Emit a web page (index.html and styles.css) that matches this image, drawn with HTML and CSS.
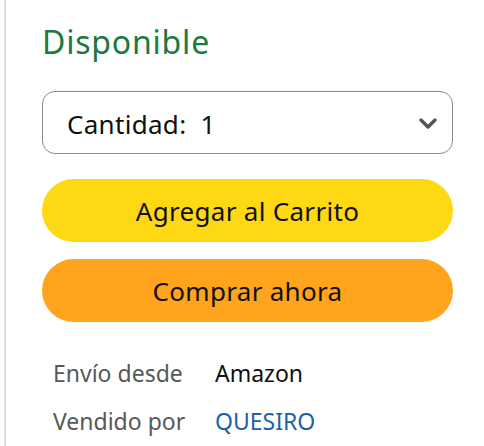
FILE: index.html
```html
<!DOCTYPE html>
<html lang="es">
<head>
  <meta charset="UTF-8">
  <meta name="viewport" content="width=device-width, initial-scale=1">
  <title>Comprar</title>
  <link rel="stylesheet" href="styles.css">
</head>
<body>
  <div class="caja">
    <div class="disponible">Disponible</div>

    <div class="cantidad">
      <span>Cantidad:&nbsp; 1</span>
      <svg class="flecha" width="20" height="14" viewBox="0 0 20 14">
        <path d="M3 3 L10 10 L17 3" fill="none" stroke="#555" stroke-width="3.4" stroke-linecap="round" stroke-linejoin="round"/>
      </svg>
    </div>

    <button class="boton carrito">Agregar al Carrito</button>
    <button class="boton comprar">Comprar ahora</button>

    <div class="info">
      <div class="fila"><span class="etiqueta">Envío desde</span><span>Amazon</span></div>
      <div class="fila"><span class="etiqueta">Vendido por</span><a href="#" class="vendedor">QUESIRO</a></div>
    </div>
  </div>
</body>
</html>
```

FILE: styles.css
```css
body {
  margin: 0;
  font-family: "Noto Sans", Arial, sans-serif;
  background: white;
  color: #0f1111;
}

.caja {
  margin-left: 4px;
  border-left: 2px solid #dcdcdc;
  padding: 22px 31px 0 36px;
  height: 446px;
  box-sizing: border-box;
}

.disponible {
  color: #1b7a3e;
  font-size: 32px;
  line-height: 40px;
  letter-spacing: 0.8px;
}

.cantidad {
  margin-top: 29px;
  height: 63px;
  box-sizing: border-box;
  border: 1.5px solid #888c8c;
  border-radius: 13px;
  display: flex;
  align-items: center;
  justify-content: space-between;
  padding: 2px 14px 0 24px;
  font-size: 26px;
  letter-spacing: 0.3px;
}

.boton {
  display: block;
  width: 100%;
  height: 63px;
  border: none;
  border-radius: 32px;
  font-family: inherit;
  font-size: 26px;
  letter-spacing: 0.3px;
  color: #0f1111;
  margin-top: 25px;
}

.carrito {
  background-color: #ffd814;
}

.comprar {
  background-color: #ffa41c;
  margin-top: 17px;
}

.info {
  margin-top: 27px;
  padding-left: 11px;
  font-size: 23px;
}

.fila {
  display: flex;
  line-height: 48px;
}

.etiqueta {
  width: 162px;
  color: #565959;
}

.vendedor {
  color: #2162a1;
  text-decoration: none;
}
```
